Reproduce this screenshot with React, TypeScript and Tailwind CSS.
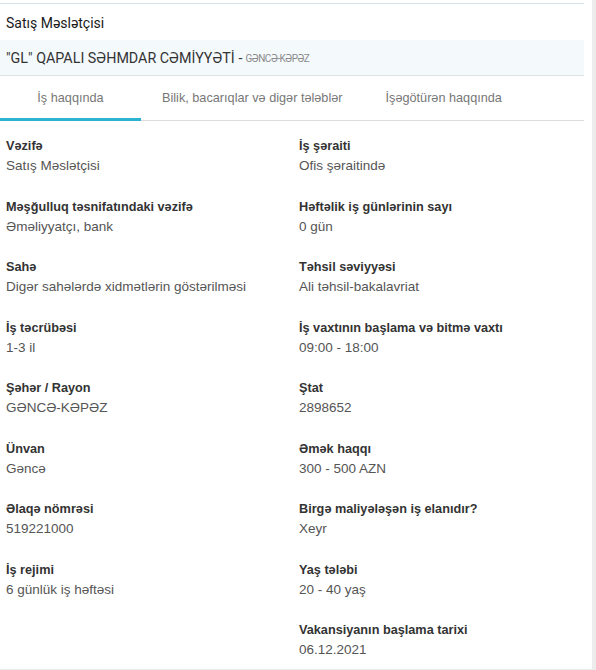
import React from 'react';

interface Field {
  label: string;
  value: string;
}

const leftFields: Field[] = [
  { label: 'Vəzifə', value: 'Satış Məslətçisi' },
  { label: 'Məşğulluq təsnifatındaki vəzifə', value: 'Əməliyyatçı, bank' },
  { label: 'Sahə', value: 'Digər sahələrdə xidmətlərin göstərilməsi' },
  { label: 'İş təcrübəsi', value: '1-3 il' },
  { label: 'Şəhər / Rayon', value: 'GƏNCƏ-KƏPƏZ' },
  { label: 'Ünvan', value: 'Gəncə' },
  { label: 'Əlaqə nömrəsi', value: '519221000' },
  { label: 'İş rejimi', value: '6 günlük iş həftəsi' },
];

const rightFields: Field[] = [
  { label: 'İş şəraiti', value: 'Ofis şəraitində' },
  { label: 'Həftəlik iş günlərinin sayı', value: '0 gün' },
  { label: 'Təhsil səviyyəsi', value: 'Ali təhsil-bakalavriat' },
  { label: 'İş vaxtının başlama və bitmə vaxtı', value: '09:00 - 18:00' },
  { label: 'Ştat', value: '2898652' },
  { label: 'Əmək haqqı', value: '300 - 500 AZN' },
  { label: 'Birgə maliyələşən iş elanıdır?', value: 'Xeyr' },
  { label: 'Yaş tələbi', value: '20 - 40 yaş' },
  { label: 'Vakansiyanın başlama tarixi', value: '06.12.2021' },
];

function FieldList({ fields }: { fields: Field[] }) {
  return (
    <div className="flex flex-col">
      {fields.map((f) => (
        <div key={f.label} className="mb-[20.5px]">
          <div className="text-[12.7px] leading-[20px] font-bold text-[#333]">{f.label}</div>
          <div className="text-[13.5px] leading-[20px] text-[#555]">{f.value}</div>
        </div>
      ))}
    </div>
  );
}

export default function App() {
  return (
    <div className="w-[596px] h-[670px] bg-[#ececec] overflow-hidden">
      <div className="w-[592px] h-[669px] bg-white pt-[3px]">
        <div className="w-[584px]">
          <div className="border-t border-[#d3e4ee] h-[37px] flex items-center pl-[6px] pt-[2px] font-['Roboto',sans-serif] text-[14px] text-[#1a1a1a]">
            Satış Məslətçisi
          </div>
          <div className="h-[36px] bg-[#f4f9fc] border-b border-[#dfe3e6] flex items-center pl-[6px] pt-[2px] font-['Roboto',sans-serif] text-[14.3px] text-[#333]">
            "GL" QAPALI SƏHMDAR CƏMİYYƏTİ
            <span className="ml-[4px]">-</span>
            <span className="ml-[3px] text-[10px] tracking-[-0.5px] text-[#8a8a8a]">GƏNCƏ-KƏPƏZ</span>
          </div>
          <div className="flex h-[45px] border-b border-[#dcdcdc] font-['Liberation_Sans',Arial,sans-serif] text-[12.7px] text-[#777]">
            <div className="relative w-[141px] flex items-center justify-center pt-[2px]">
              İş haqqında
              <div className="absolute left-0 right-0 -bottom-px h-[3px] bg-[#2bb3cf]" />
            </div>
            <div className="px-[21px] flex items-center pt-[2px]">Bilik, bacarıqlar və digər tələblər</div>
            <div className="px-[22px] flex items-center pt-[2px]">İşəgötürən haqqında</div>
          </div>
          <div className="grid grid-cols-[293px_1fr] pl-[6px] pt-[15px] font-['Liberation_Sans',Arial,sans-serif]">
            <FieldList fields={leftFields} />
            <FieldList fields={rightFields} />
          </div>
        </div>
      </div>
    </div>
  );
}
